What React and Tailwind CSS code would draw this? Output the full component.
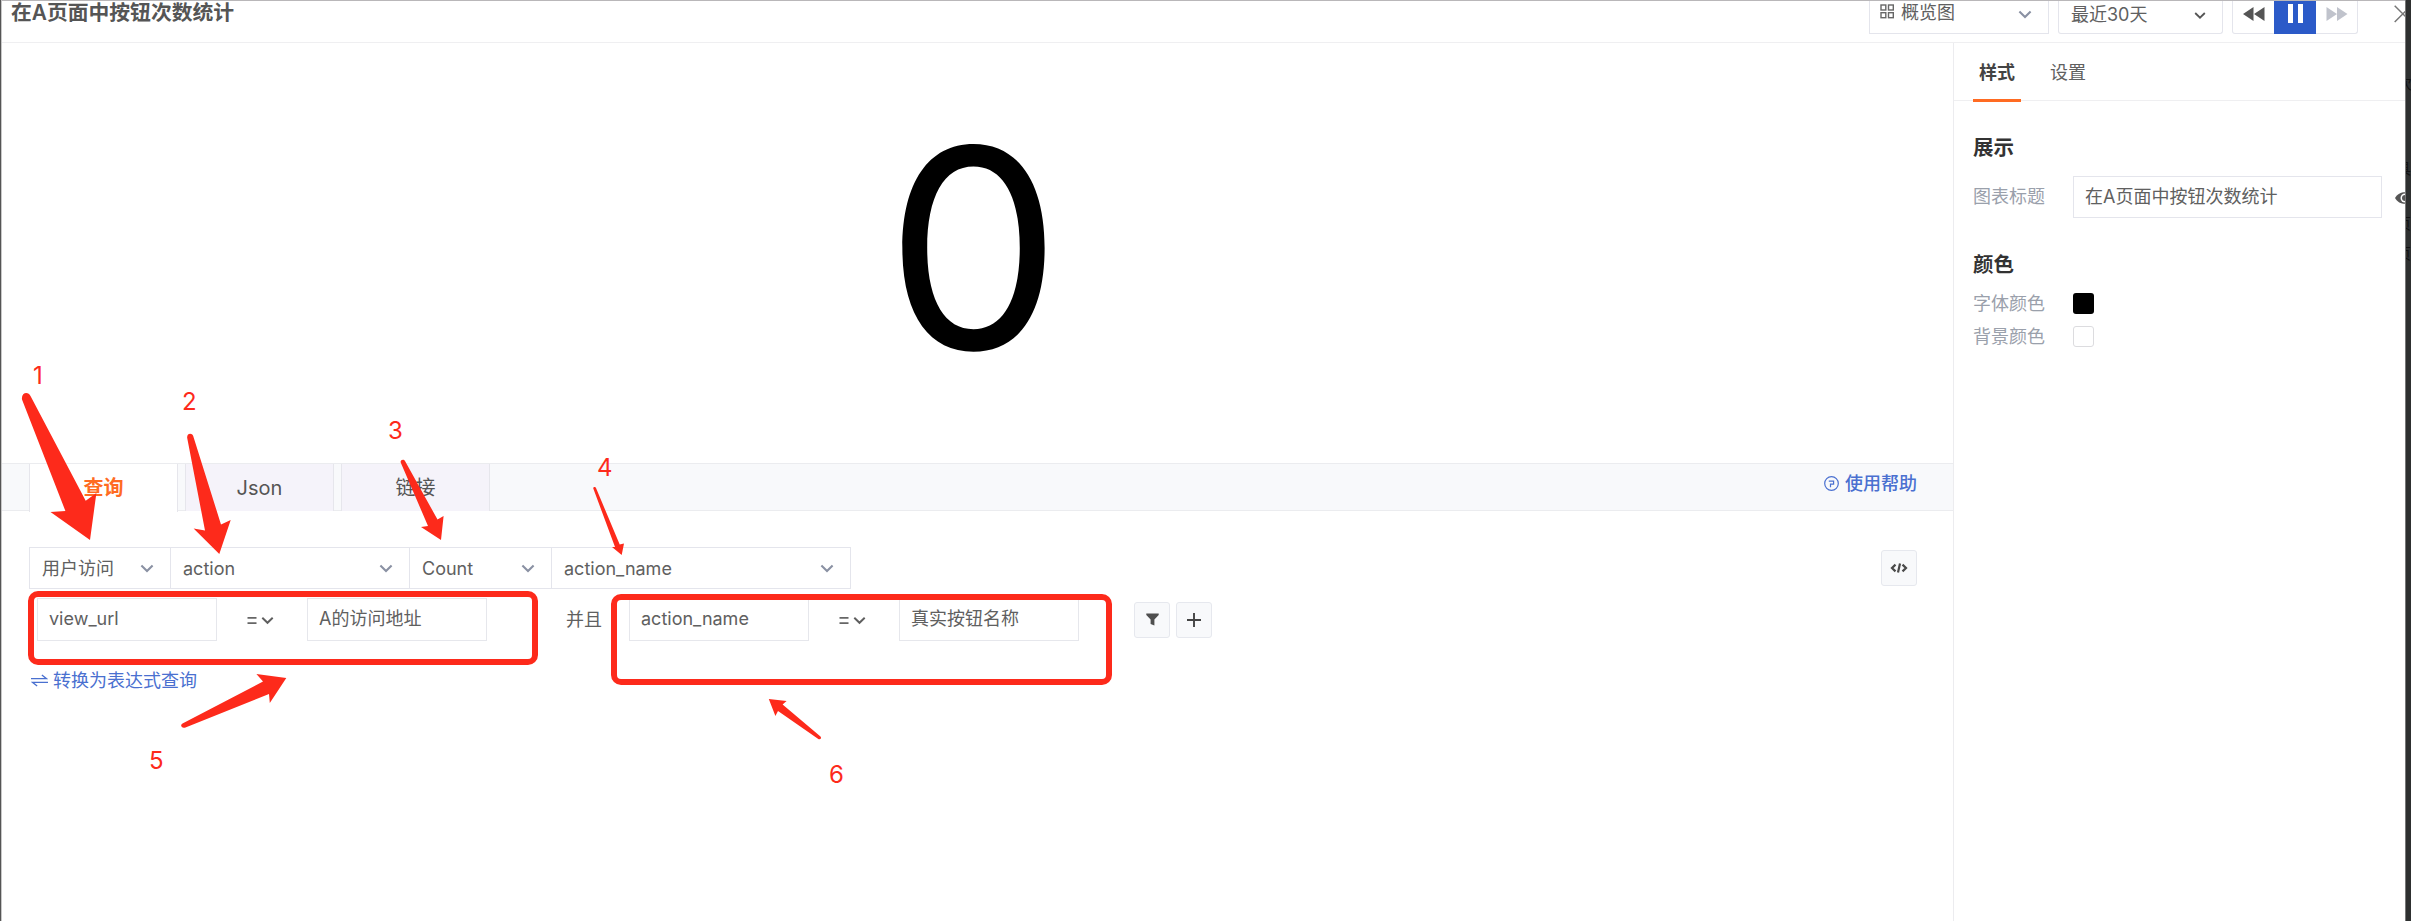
import React from "react";

const FONT = "font-[Inter,'Noto_Sans_CJK_SC',sans-serif]";

function Chevron({ className = "", color = "#8a91a3", w = 14, h = 9 }) {
  return (
    <svg width={w} height={h} viewBox="0 0 14 9" fill="none" className={"shrink-0 " + className}>
      <path d="M1.4 1.6 L7 7 L12.6 1.6" stroke={color} strokeWidth="2.1" />
    </svg>
  );
}

function Select({ label, className }) {
  return (
    <div className={"flex h-[42px] items-center justify-between border-y border-l border-[#e4e5ec] pl-[12px] pr-4 pt-px " + className}>
      <span>{label}</span>
      <Chevron />
    </div>
  );
}

function Field({ label }) {
  return (
    <div className="flex h-[43px] w-[180px] items-center border border-[#e6e7ec] pl-[11px] pb-[3px]">{label}</div>
  );
}

function Operator() {
  return (
    <div className="flex w-[90px] items-center justify-center gap-[4px] pr-[3px] pt-[2px]">
      <svg width="10" height="9" viewBox="0 0 10 9"><path d="M0.5 1.8h9M0.5 7.2h9" stroke="#666" strokeWidth="1.7" /></svg>
      <Chevron color="#5f5f5f" w={13} />
    </div>
  );
}

function SquareButton({ children }) {
  return (
    <div className="flex size-9 items-center justify-center rounded-[3px] border border-[#e6e8ee] bg-[#f8f9fb]">{children}</div>
  );
}

function Header() {
  return (
    <header className="flex h-[42px] shrink-0 items-start border-b border-[#efeff1] pl-[9px]">
      <h1 className="-mt-[3px] flex-1 text-[20.8px] leading-[30px] font-semibold text-[#555]">在A页面中按钮次数统计</h1>
      <div className="flex h-[33px] w-[180px] items-center border-x border-b border-[#e4e5ec] pb-[9px] pl-[10px] pr-4">
        <svg width="15" height="15" viewBox="0 0 15 15" fill="none" stroke="#666" strokeWidth="1.4" className="-mt-[2px]">
          <rect x="1" y="1" width="4.800" height="5" /><rect x="8.500" y="1" width="4.800" height="5" />
          <rect x="1" y="8.700" width="4.800" height="5" /><rect x="8.500" y="8.700" width="4.800" height="5" />
        </svg>
        <span className="-mt-px ml-[6px] flex-1">概览图</span>
        <Chevron className="mt-[3px]" />
      </div>
      <div className="ml-[9px] flex h-[33px] w-[165px] items-center justify-between rounded-b-[3px] border-x border-b border-[#e4e5ec] pb-[5px] pl-[12px] pr-4">
        <span>最近30天</span>
        <Chevron color="#555" w={12} className="mt-[2px]" />
      </div>
      <div className="ml-[9px] flex h-[33px] w-[126px] rounded-b-[3px] border-x border-b border-[#e4e5ec]">
        <div className="flex w-[41px] justify-center pt-[6px]">
          <svg width="22" height="14" viewBox="0 0 22 14" fill="#555"><path d="M10.5 0v14L0 7zM21.5 0v14L11 7z" /></svg>
        </div>
        <div className="flex h-[33px] w-[42px] justify-center gap-[5px] bg-[#2b5ac8] pt-[3px]">
          <i className="h-[19px] w-[5px] bg-white" />
          <i className="h-[19px] w-[5px] bg-white" />
        </div>
        <div className="flex w-[41px] justify-center pt-[6px]">
          <svg width="22" height="14" viewBox="0 0 22 14" fill="#c0c3cc"><path d="M0.5 0v14L11 7zM11 0v14L21.5 7z" /></svg>
        </div>
      </div>
      <div className="ml-[36px] w-[11px] overflow-hidden pt-[4px]">
        <svg width="18" height="18" viewBox="0 0 18 18" fill="none"><path d="M0.7 0.7L17 17M0.7 17L17 0.7" stroke="#777" strokeWidth="1.5" /></svg>
      </div>
    </header>
  );
}

function Tabs() {
  const tab = "flex w-[149px] items-center justify-center border-x border-[#e6e6ec] text-[20px]";
  return (
    <div className="flex h-[48px] border-t border-[#ebecef] bg-[#f8f9fb] shadow-[inset_0_-1px_0_#ebecef]">
      <div className="w-[27px]" />
      <div className={tab + " h-[48px] bg-white font-semibold text-[#ff6b22]"}>查询</div>
      <div className={tab + " ml-[7px] h-[47px] bg-[#f5f3fa] pt-px text-[#555]"}>Json</div>
      <div className={tab + " ml-[7px] h-[47px] bg-[#f5f3fa] pt-px text-[#555]"}>链接</div>
      <div className="ml-auto flex h-[38px] items-center gap-[6px] pr-[36px] font-medium text-[#4a70d0]">
        <svg width="15" height="15" viewBox="0 0 15 15" fill="none" stroke="#4a70d0" strokeWidth="1.2">
          <circle cx="7.5" cy="7.5" r="6.8" /><path d="M4.8 5.2h4.8v3H6.5v3" />
        </svg>
        使用帮助
      </div>
    </div>
  );
}

function Query() {
  return (
    <div className="pl-[27px]">
      <div className="mt-[36px] flex items-center">
        <Select label="用户访问" className="w-[141px]" />
        <Select label="action" className="w-[239px]" />
        <Select label="Count" className="w-[142px]" />
        <Select label="action_name" className="w-[300px] border-r" />
        <div className="ml-auto mr-[36px]">
          <SquareButton>
            <svg width="18" height="10" viewBox="0 0 18 10" fill="none" stroke="#4a4a4a" strokeWidth="2.2"><path d="M5.5 1.6L2 5l3.500 3.400M12.500 1.600L16 5l-3.500 3.400M10 0.500L8 9.500" /></svg>
          </SquareButton>
        </div>
      </div>
      <div className="mt-[9px] flex h-[43px] items-center pl-[8px]">
        <Field label="view_url" />
        <Operator />
        <Field label="A的访问地址" />
        <span className="ml-[79px] w-[63px]">并且</span>
        <Field label="action_name" />
        <Operator />
        <Field label="真实按钮名称" />
        <div className="ml-[55px] flex gap-[6px]">
          <SquareButton>
            <svg width="13" height="13" viewBox="0 0 13 13" fill="#4f4f4f"><path d="M0.300 0.500h12.400v1.500L8.400 6.500v6L4.600 11V6.500L0.300 2z" /></svg>
          </SquareButton>
          <SquareButton>
            <svg width="14" height="14" viewBox="0 0 14 14"><path d="M7 0v14M0 7h14" stroke="#444" strokeWidth="1.900" /></svg>
          </SquareButton>
        </div>
      </div>
      <div className="mt-[26px] flex items-center gap-[5px] pl-[2px] leading-[27px] text-[#4a70d0]">
        <svg width="17" height="13" viewBox="0 0 18 13" fill="none" stroke="#4a70d0" strokeWidth="1.400"><path d="M0 4.600h16.500l-5-4M18 8.400H1.500l5 4" /></svg>
        转换为表达式查询
      </div>
    </div>
  );
}

function SidePanel() {
  return (
    <aside className="w-[452px] shrink-0 overflow-hidden border-l border-[#ececef]">
      <div className="flex h-[58px] gap-[23px] border-b border-[#efeff1] pl-[19px]">
        <div className="flex h-[59px] w-[48px] items-center justify-center border-b-[3px] border-[#ff6b22] pt-[3px] font-semibold text-[#444]">样式</div>
        <div className="flex h-[59px] w-[48px] items-center justify-center">设置</div>
      </div>
      <div className="pl-[19px]">
        <h2 className="mt-[32px] text-[20.500px] leading-[30px] font-semibold text-[#333]">展示</h2>
        <div className="mt-[13px] flex items-center">
          <span className="w-[100px] shrink-0 pb-px text-[#9aa0ab]">图表标题</span>
          <div className="flex h-[42px] w-[309px] shrink-0 items-center border border-[#e4e5ec] pb-px pl-[11px]">在A页面中按钮次数统计</div>
          <svg width="20" height="12" viewBox="0 0 20 12" className="ml-[13px] mt-[2px] shrink-0"><path d="M0 6C4-1.800 16-1.800 20 6 16 13.800 4 13.800 0 6z" fill="#555" /><circle cx="10" cy="6" r="4.500" fill="#fff" /><circle cx="10" cy="6" r="3" fill="#555" /></svg>
        </div>
        <h2 className="mt-[32px] text-[20.500px] leading-[30px] font-semibold text-[#333]">颜色</h2>
        <div className="mt-[7px] flex h-[33px] items-center">
          <span className="w-[100px] text-[#9aa0ab]">字体颜色</span>
          <i className="size-[21px] rounded-[3px] bg-black" />
        </div>
        <div className="flex h-[33px] items-center">
          <span className="w-[100px] text-[#9aa0ab]">背景颜色</span>
          <i className="size-[21px] rounded-[3px] border border-[#dcdcdf] bg-white" />
        </div>
      </div>
    </aside>
  );
}

function Backdrop() {
  return (
    <div className="flex-1 overflow-hidden border-l border-[#777] bg-[#2e3030] text-[15px] leading-[20px] text-[#111]">
      <div className="mt-[74px] -ml-[9px] w-4">次</div>
      <div className="mt-[65px] -ml-[10px] w-4">具</div>
      <div className="mt-[35px] -ml-[10px] w-4">页</div>
      <div className="mt-[10px] -ml-[10px] w-4">页</div>
    </div>
  );
}

const ARROWS = [
  "M22 399.500C21 392 28.500 391 30.500 396L85.700 500.700 96.400 493 90 540 50.500 512 65.400 511Z",
  "M187.200 438C186.500 433 192 432.500 193.200 436L221 524.500 230.700 520 219.300 554 193.600 528.500 205 530.500Z",
  "M400.700 462.500C400 459.500 404 459 405 461L437.500 519.500 443.600 516 441 540 421 527 428 526Z",
  "M593.300 488.500C593 486.500 595.500 486.500 596 488L619.700 544.500 624 543.500 621.700 555 612 547 615 547Z",
  "M182.500 723.500C179.500 725.500 182 729 185.500 727.500L269 694 269.800 703 286.300 678 256.400 674 263 681.500Z",
  "M820.500 736.500C822 738.500 820 740 818.300 739L778 711 775.400 716 768.800 699 786.600 701 782.600 704.500Z",
];

const LABELS = [
  ["1", "left-[33px] top-[361px]"],
  ["2", "left-[182px] top-[387px]"],
  ["3", "left-[388px] top-[416px]"],
  ["4", "left-[597px] top-[453px]"],
  ["5", "left-[149px] top-[746px]"],
  ["6", "left-[829px] top-[760px]"],
];

function Annotations() {
  return (
    <>
      <div className="absolute left-[28px] top-[591px] h-[74px] w-[510px] rounded-[10px] border-[6px] border-[#fd2a1b]" />
      <div className="absolute left-[611px] top-[594px] h-[91px] w-[501px] rounded-[10px] border-[6px] border-[#fd2a1b]" />
      <svg className="absolute left-0 top-0" width="2411" height="921" viewBox="0 0 2411 921" fill="#fd2a1b">
        {ARROWS.map((d) => <path key={d} d={d} />)}
      </svg>
      {LABELS.map(([n, pos]) => (
        <span key={n} className={"absolute text-[24px] leading-[30px] font-normal text-[#fd2a1b] " + pos}>{n}</span>
      ))}
    </>
  );
}

export default function App() {
  return (
    <div className={"relative flex h-[921px] w-[2411px] overflow-hidden bg-white text-[18px] text-[#606060] " + FONT}>
      <div className="w-[2px] shrink-0 border-r border-[#c8c8c8] bg-[#555]" />
      <div className="flex w-[2403px] shrink-0 flex-col border-t border-[#b9b7b9]">
        <Header />
        <div className="flex flex-1">
          <main className="flex-1">
            <div className="flex h-[420px] items-center justify-center text-[278px] leading-none text-black">
              <span className="-mt-[10px] ml-[-8px]">0</span>
            </div>
            <Tabs />
            <Query />
          </main>
          <SidePanel />
        </div>
      </div>
      <Backdrop />
      <Annotations />
    </div>
  );
}
